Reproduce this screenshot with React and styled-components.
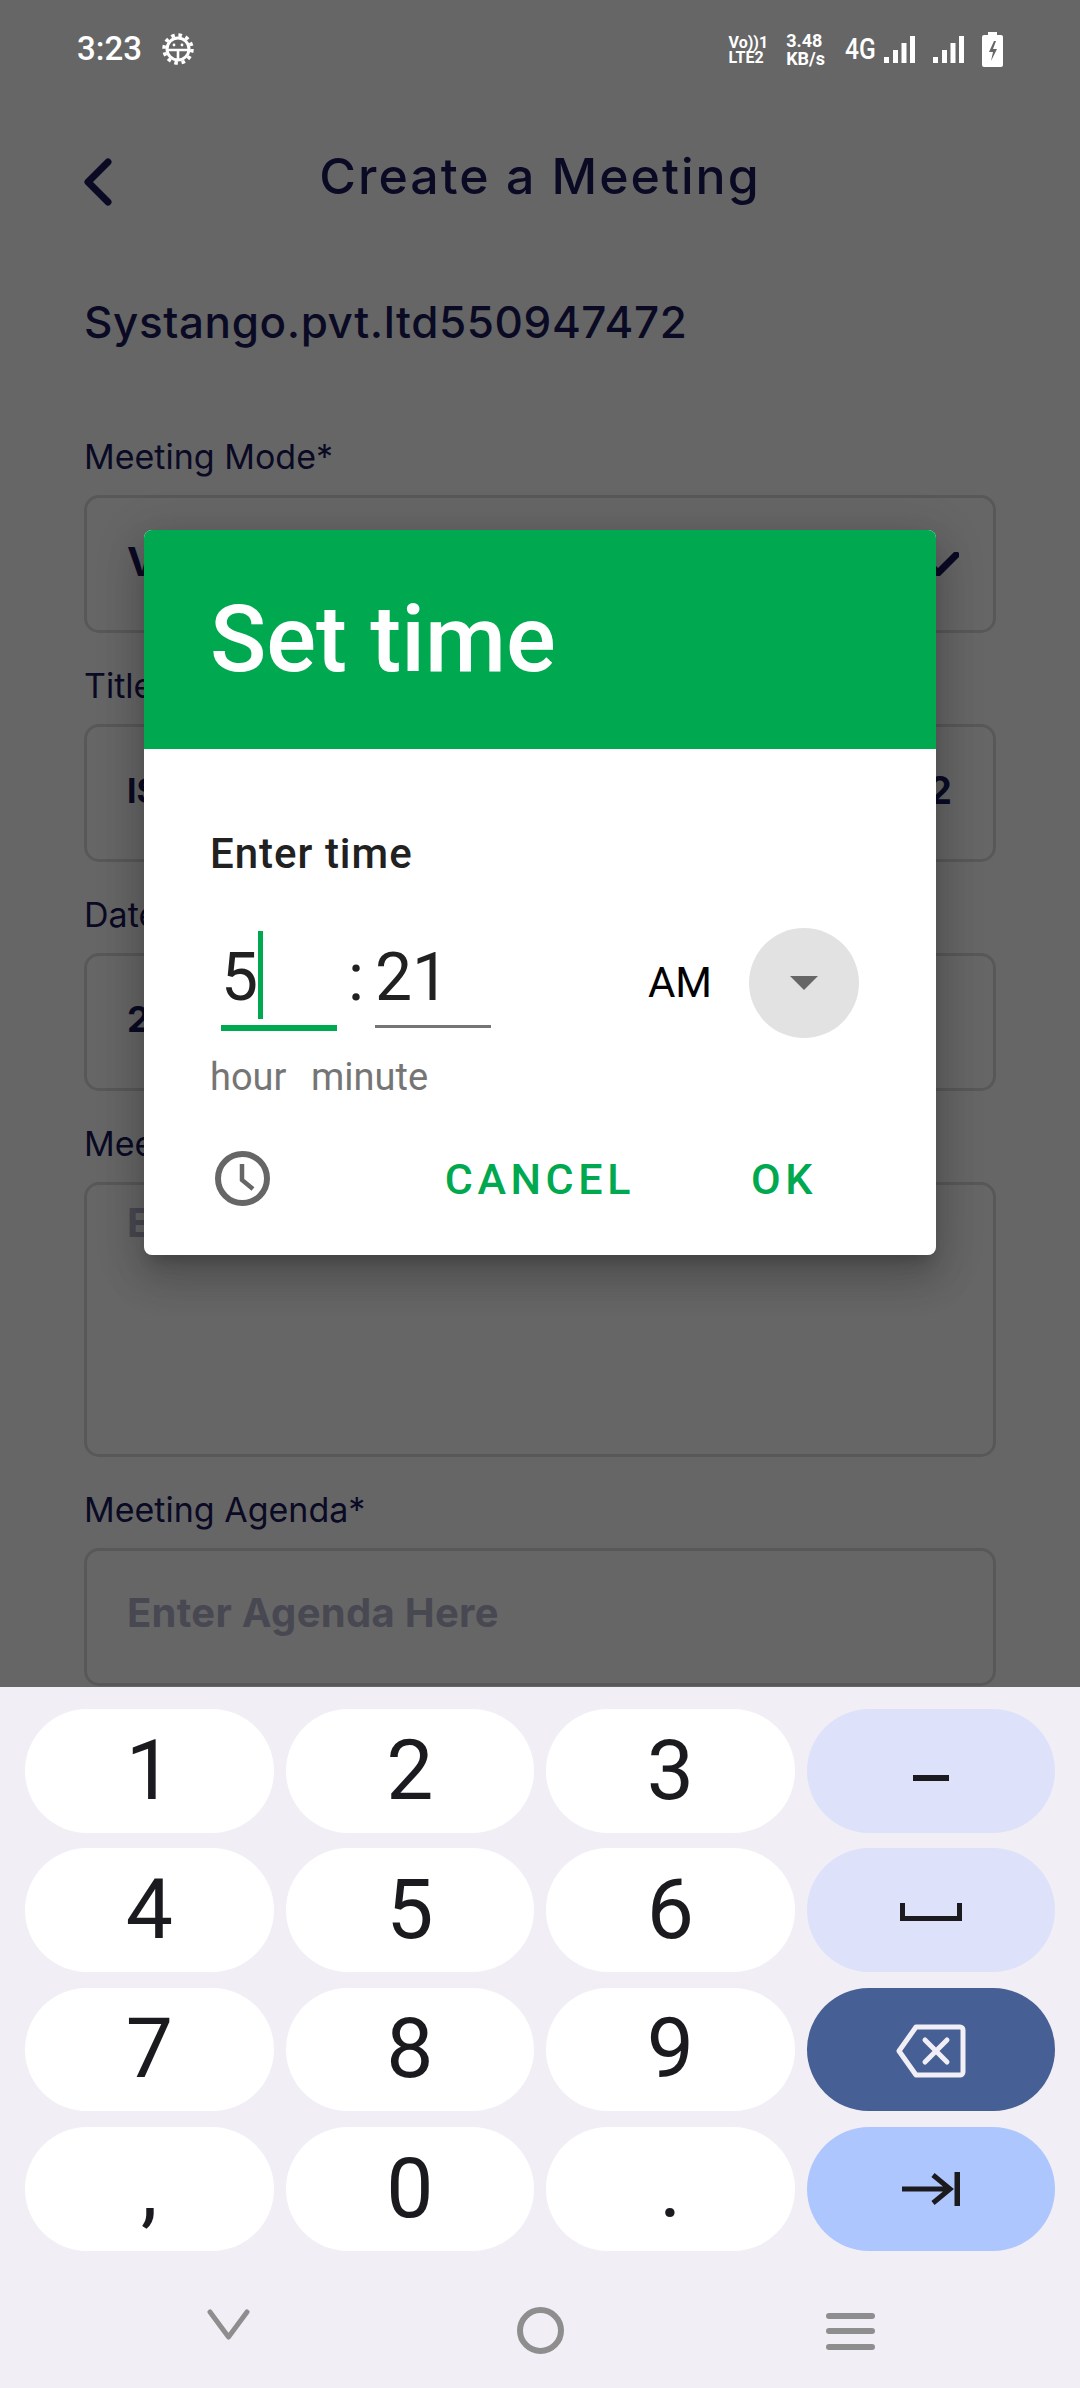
import styled, { createGlobalStyle } from "styled-components";

const Global = createGlobalStyle`
  html, body { margin: 0; padding: 0; background: #f1eff5; }
  * { box-sizing: border-box; }
`;

const Screen = styled.div`
  width: 1080px;
  height: 2388px;
  overflow: hidden;
  font-family: Roboto, sans-serif;
`;

const Top = styled.div`
  position: relative;
  height: 1687px;
  overflow: hidden;
  background: #fff;
`;

const Scrim = styled.div`
  position: absolute;
  inset: 0;
  background: rgba(0, 0, 0, 0.6);
  z-index: 1;
`;

const StatusBar = styled.div`
  position: relative;
  z-index: 2;
  height: 96px;
  display: flex;
  align-items: flex-start;
  justify-content: space-between;
  padding: 32px 77px 0 77px;
  color: #fff;
`;

const StatusLeft = styled.div`
  display: flex;
  align-items: center;
  gap: 20px;
`;

const Clock = styled.span`
  font-size: 33px;
  line-height: 33px;
  font-weight: 500;
`;

const StatusRight = styled.div`
  display: flex;
  align-items: center;
  height: 35px;
`;

const TinyStack = styled.div`
  display: flex;
  flex-direction: column;
  font-size: ${(p) => p.$size}px;
  line-height: ${(p) => p.$line}px;
  font-weight: 700;
  margin-right: ${(p) => p.$gap}px;
  white-space: nowrap;
`;

const NetType = styled.span`
  font-size: 29px;
  line-height: 29px;
  font-weight: 500;
  transform: scaleX(0.85);
  transform-origin: left center;
  width: 28px;
  margin-right: 11px;
`;

const SignalIcon = styled.svg`
  margin-right: ${(p) => p.$gap}px;
`;

const Form = styled.div`
  padding: 0 84px;
  font-family: Inter, sans-serif;
  color: #1a1a5a;
`;

const Header = styled.div`
  display: grid;
  grid-template-columns: 1fr auto 1fr;
  align-items: center;
  height: 70px;
  margin-top: 50px;
`;

const Title = styled.h1`
  margin: 0 0 12px;
  font-size: 50px;
  font-weight: 500;
  letter-spacing: 2px;
`;

const Company = styled.div`
  height: 60px;
  line-height: 60px;
  margin: 76px 0 85px;
  font-size: 44px;
  font-weight: 500;
  letter-spacing: 0.6px;
`;

const Group = styled.div`
  margin-bottom: 33px;
`;

const Label = styled.div`
  height: 40px;
  line-height: 40px;
  margin-bottom: 18px;
  font-size: 34px;
`;

const Field = styled.div`
  height: ${(p) => p.$height || 138}px;
  display: flex;
  align-items: ${(p) => (p.$top ? "flex-start" : "center")};
  justify-content: space-between;
  padding: ${(p) => (p.$top ? "13px" : "0")} 41px 0 40px;
  border: 3px solid #dcdcdc;
  border-radius: 15px;
`;

const Value = styled.span`
  margin-bottom: 6px;
  font-size: ${(p) => p.$size}px;
  font-weight: 700;
`;

const Placeholder = styled.span`
  margin-bottom: 8px;
  font-size: 40px;
  line-height: 50px;
  font-weight: 700;
  letter-spacing: 0.3px;
  color: #b4b4cc;
`;

const Dialog = styled.div`
  position: absolute;
  z-index: 3;
  left: 144px;
  top: 530px;
  width: 792px;
  height: 725px;
  background: #fff;
  border-radius: 8px;
  overflow: hidden;
`;

const DialogShadow = styled.div`
  position: absolute;
  z-index: 2;
  left: 144px;
  top: 530px;
  width: 792px;
  height: 725px;
  border-radius: 8px;
  box-shadow: 0 24px 38px 3px rgba(0, 0, 0, 0.14), 0 9px 46px 8px rgba(0, 0, 0, 0.12), 0 11px 15px -7px rgba(0, 0, 0, 0.2);
`;

const DialogHead = styled.div`
  height: 219px;
  display: flex;
  align-items: center;
  padding-left: 66px;
  background: #00a94f;
  color: #fff;
  font-size: 93px;
  font-weight: 500;
`;

const DialogBody = styled.div`
  padding: 80px 0 0 66px;
`;

const EnterTime = styled.div`
  height: 50px;
  line-height: 50px;
  font-size: 42px;
  font-weight: 500;
  color: #212121;
  letter-spacing: 1px;
`;

const TimeRow = styled.div`
  display: flex;
  align-items: flex-start;
  height: 110px;
  margin-top: 49px;
  padding: 0 77px 0 11px;
`;

const TimeField = styled.div`
  width: 116px;
  height: ${(p) => (p.$active ? 101 : 98)}px;
  margin-top: 2px;
  display: flex;
  align-items: center;
  border-bottom: ${(p) => (p.$active ? "6px solid #00a94f" : "3px solid #757575")};
  font-size: 66px;
  color: #212121;
`;

const Caret = styled.span`
  width: 5px;
  height: 88px;
  margin: 0 0 5px 0;
  background: #00a94f;
`;

const Colon = styled.span`
  width: 38px;
  height: 98px;
  display: flex;
  align-items: center;
  justify-content: center;
  font-size: 66px;
  color: #212121;
`;

const Meridiem = styled.span`
  margin-left: auto;
  margin-right: 37px;
  line-height: 110px;
  font-size: 42px;
  color: #000;
`;

const Spinner = styled.div`
  width: 110px;
  height: 110px;
  display: flex;
  align-items: center;
  justify-content: center;
  border-radius: 50%;
  background: #e2e2e2;
  &::after {
    content: "";
    border-left: 14px solid transparent;
    border-right: 14px solid transparent;
    border-top: 14px solid #666;
  }
`;

const Hints = styled.div`
  display: flex;
  margin-top: 14px;
  font-size: 38px;
  line-height: 50px;
  color: #757575;
`;

const Hint = styled.span`
  width: ${(p) => p.$width}px;
`;

const Footer = styled.div`
  display: flex;
  align-items: center;
  gap: 116px;
  margin-top: 49px;
  padding: 0 119px 0 5px;
  font-size: 43px;
  font-weight: 500;
  letter-spacing: 4.6px;
  color: #00a94f;
`;

const FooterIcon = styled.svg`
  margin-right: auto;
`;

const Keyboard = styled.div`
  height: 701px;
  background: #f1eff5;
  padding: 22px 25px 0;
`;

const Keys = styled.div`
  display: grid;
  grid-template-columns: repeat(4, 1fr);
  grid-auto-rows: 123.67px;
  column-gap: 12px;
  row-gap: 15.67px;
`;

const Key = styled.div`
  display: flex;
  align-items: center;
  justify-content: center;
  border-radius: 62px;
  background: ${(p) => p.$bg || "#fff"};
  font-size: 84px;
  line-height: 1;
  color: #1b1b1f;
`;

const KeyIcon = styled.svg`
  margin-top: ${(p) => p.$drop || 0}px;
`;

const ModeArrow = styled.svg`
  margin-right: -7px;
`;

const Nav = styled.div`
  display: flex;
  align-items: center;
  height: 47px;
  margin-top: 56px;
  padding-left: 182px;
`;

const NavIcon = styled.svg`
  margin-right: ${(p) => p.$gap || 0}px;
`;

const digits = ["1", "2", "3", null, "4", "5", "6", null, "7", "8", "9", null, ",", "0", ".", null];

const specialKeys = [
  <Key key="minus" $bg="#dde2fa">
    <KeyIcon width="36" height="6" viewBox="0 0 36 6" $drop="14">
      <rect width="36" height="6" fill="#1b1b1f" />
    </KeyIcon>
  </Key>,
  <Key key="space" $bg="#dde2fa">
    <KeyIcon width="62" height="18" viewBox="0 0 62 18" $drop="4" fill="none" stroke="#1b1b1f" strokeWidth="5">
      <path d="M2.5 0v15.5h57V0" />
    </KeyIcon>
  </Key>,
  <Key key="back" $bg="#465f94">
    <KeyIcon width="70" height="54" viewBox="0 0 70 54" $drop="4" fill="none" stroke="#f1eff5" strokeWidth="5" strokeLinejoin="round" strokeLinecap="round">
      <path d="M20 3h44a3 3 0 0 1 3 3v42a3 3 0 0 1-3 3H20L3 27z" />
      <path d="M29 16l22 22M51 16L29 38" />
    </KeyIcon>
  </Key>,
  <Key key="tab" $bg="#aec6fe">
    <KeyIcon width="58" height="34" viewBox="0 0 58 34" fill="none" stroke="#1b1b1f" strokeWidth="5">
      <path d="M0 17h48M31 3l17 14-17 14" />
      <path d="M55.5 0v34" strokeWidth="6" />
    </KeyIcon>
  </Key>,
];

function GearIcon() {
  return (
    <svg width="32" height="32" viewBox="0 0 32 32" fill="none" stroke="#fff">
      <circle cx="16" cy="16" r="11" strokeWidth="3" />
      <circle cx="16" cy="16" r="14" strokeWidth="3.5" strokeDasharray="3.6 3.73" />
      <path d="M6 17h20M16 17v9" strokeWidth="2.6" />
      <circle cx="12" cy="12" r="1.4" fill="#fff" stroke="none" />
      <circle cx="20" cy="12" r="1.4" fill="#fff" stroke="none" />
    </svg>
  );
}

function Signal({ gap }) {
  return (
    <SignalIcon $gap={gap} width="31" height="27" viewBox="0 0 31 27" fill="#fff">
      <rect x="0" y="21" width="5" height="6" />
      <rect x="9" y="14" width="5" height="13" />
      <rect x="17.5" y="7" width="5" height="20" />
      <rect x="26" y="0" width="5" height="27" />
    </SignalIcon>
  );
}

export default function App() {
  return (
    <Screen>
      <Global />
      <Top>
        <StatusBar>
          <StatusLeft>
            <Clock>3:23</Clock>
            <GearIcon />
          </StatusLeft>
          <StatusRight>
            <TinyStack $size={16} $line={15} $gap={18}>
              <span>Vo))1</span>
              <span>LTE2</span>
            </TinyStack>
            <TinyStack $size={18} $line={18} $gap={20}>
              <span>3.48</span>
              <span>KB/s</span>
            </TinyStack>
            <NetType>4G</NetType>
            <Signal gap={18} />
            <Signal gap={18} />
            <svg width="21" height="35" viewBox="0 0 21 35" fill="#fff">
              <path d="M6 0h9v3h4a2 2 0 0 1 2 2v28a2 2 0 0 1-2 2H2a2 2 0 0 1-2-2V5a2 2 0 0 1 2-2h4z" />
              <path d="M12 9l-5 11h4l-2 9 6-12h-4l3-8z" fill="#666" />
            </svg>
          </StatusRight>
        </StatusBar>
        <Form>
          <Header>
            <svg width="28" height="48" viewBox="0 0 28 48" fill="none" stroke="#1a1a5a" strokeWidth="7" strokeLinecap="round" strokeLinejoin="round">
              <path d="M24 4L4 24l20 20" />
            </svg>
            <Title>Create a Meeting</Title>
          </Header>
          <Company>Systango.pvt.ltd550947472</Company>
          <Group>
            <Label>Meeting Mode*</Label>
            <Field>
              <Value $size={40}>Virtual</Value>
              <ModeArrow width="42" height="24" viewBox="0 0 42 24" fill="none" stroke="#1a1a5a" strokeWidth="7" strokeLinecap="round" strokeLinejoin="round">
                <path d="M3 3l18 18L39 3" />
              </ModeArrow>
            </Field>
          </Group>
          <Group>
            <Label>Title*</Label>
            <Field>
              <Value $size={34}>IS</Value>
              <Value $size={38}>2</Value>
            </Field>
          </Group>
          <Group>
            <Label>Date*</Label>
            <Field>
              <Value $size={36}>2</Value>
            </Field>
          </Group>
          <Group>
            <Label>Meeting Description*</Label>
            <Field $height={275} $top>
              <Placeholder>Enter Description Here</Placeholder>
            </Field>
          </Group>
          <Group>
            <Label>Meeting Agenda*</Label>
            <Field>
              <Placeholder>Enter Agenda Here</Placeholder>
            </Field>
          </Group>
        </Form>
        <Scrim />
        <DialogShadow />
        <Dialog>
          <DialogHead>Set time</DialogHead>
          <DialogBody>
            <EnterTime>Enter time</EnterTime>
            <TimeRow>
              <TimeField $active>
                5
                <Caret />
              </TimeField>
              <Colon>:</Colon>
              <TimeField>21</TimeField>
              <Meridiem>AM</Meridiem>
              <Spinner />
            </TimeRow>
            <Hints>
              <Hint $width={101}>hour</Hint>
              <Hint>minute</Hint>
            </Hints>
            <Footer>
              <FooterIcon width="55" height="55" viewBox="0 0 55 55" fill="none" stroke="#666" strokeWidth="6">
                <circle cx="27.5" cy="27.5" r="24.5" />
                <path d="M27 13v16l11 9" strokeWidth="4.5" />
              </FooterIcon>
              <span>CANCEL</span>
              <span>OK</span>
            </Footer>
          </DialogBody>
        </Dialog>
      </Top>
      <Keyboard>
        <Keys>
          {digits.map((d, i) => (d ? <Key key={i}>{d}</Key> : specialKeys[(i - 3) / 4]))}
        </Keys>
        <Nav>
          <NavIcon $gap={267} width="43" height="47" viewBox="0 0 43 47" fill="none" stroke="#8e8e8e" strokeWidth="5" strokeLinecap="round" strokeLinejoin="round">
            <path d="M3 5l18.5 25L40 5" />
          </NavIcon>
          <NavIcon $gap={262} width="47" height="47" viewBox="0 0 47 47" fill="none" stroke="#8e8e8e" strokeWidth="6">
            <circle cx="23.5" cy="23.5" r="20.5" />
          </NavIcon>
          <NavIcon width="49" height="47" viewBox="0 0 49 47" fill="#8e8e8e">
            <rect y="6" width="49" height="6" rx="3" />
            <rect y="21" width="49" height="6" rx="3" />
            <rect y="37" width="49" height="6" rx="3" />
          </NavIcon>
        </Nav>
      </Keyboard>
    </Screen>
  );
}
